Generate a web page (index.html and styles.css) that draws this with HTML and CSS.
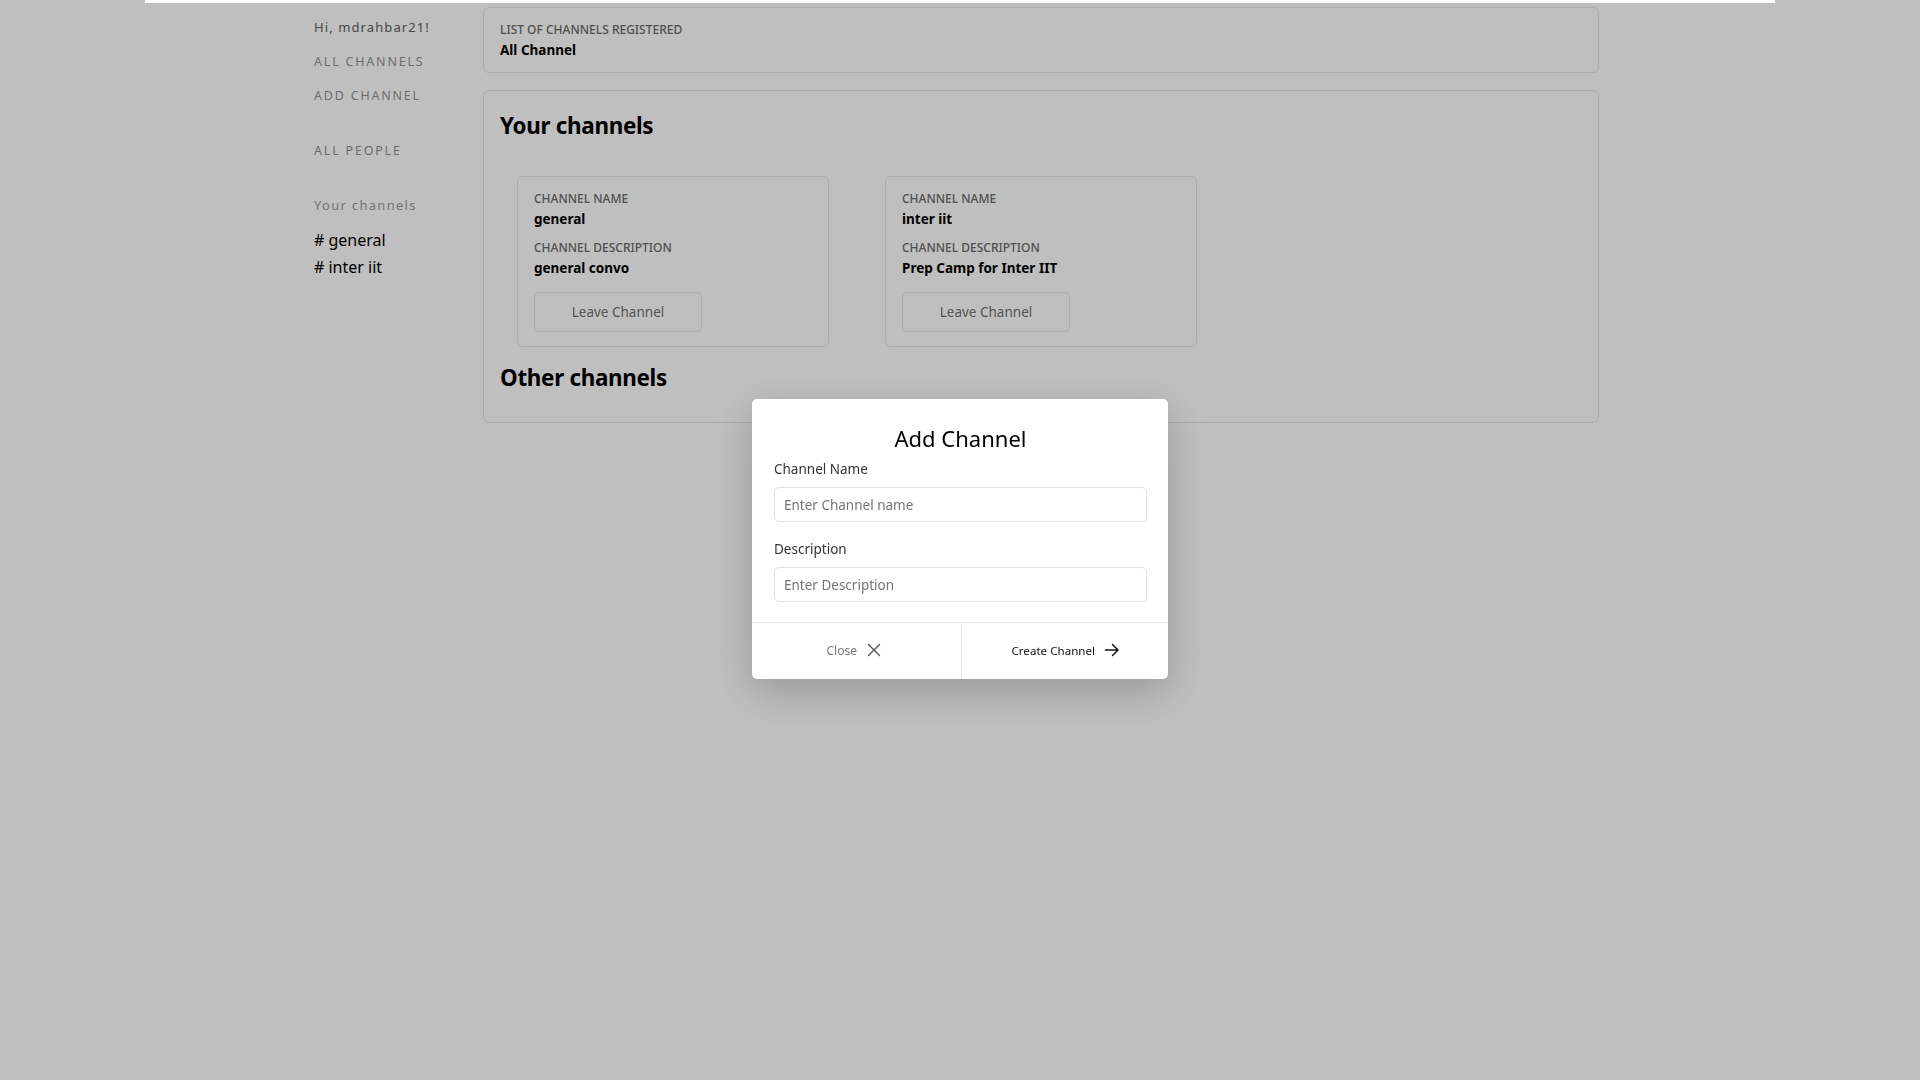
FILE: index.html
```html
<!DOCTYPE html>
<html lang="en">
<head>
<meta charset="utf-8">
<title>Channels</title>
<link rel="stylesheet" href="styles.css">
</head>
<body>
<div class="topbar"></div>
<div class="layout">
  <aside class="sidebar">
    <div class="greet">Hi, mdrahbar21!</div>
    <a class="nav nav-all">ALL CHANNELS</a>
    <a class="nav nav-add">ADD CHANNEL</a>
    <a class="nav nav-people">ALL PEOPLE</a>
    <div class="side-title">Your channels</div>
    <a class="chan chan-first"># general</a>
    <a class="chan"># inter iit</a>
  </aside>
  <main class="main">
    <section class="panel panel-head">
      <div class="label">LIST OF CHANNELS REGISTERED</div>
      <div class="value">All Channel</div>
    </section>
    <section class="panel panel-body">
      <h2 class="heading">Your channels</h2>
      <div class="cards">
        <div class="card">
          <div class="label">CHANNEL NAME</div>
          <div class="value">general</div>
          <div class="label label-gap">CHANNEL DESCRIPTION</div>
          <div class="value">general convo</div>
          <button class="leave">Leave Channel</button>
        </div>
        <div class="card">
          <div class="label">CHANNEL NAME</div>
          <div class="value">inter iit</div>
          <div class="label label-gap">CHANNEL DESCRIPTION</div>
          <div class="value">Prep Camp for Inter IIT</div>
          <button class="leave">Leave Channel</button>
        </div>
      </div>
      <h2 class="heading heading-other">Other channels</h2>
    </section>
  </main>
</div>

<div class="overlay">
  <div class="modal">
    <div class="modal-body">
      <h3 class="modal-title">Add Channel</h3>
      <label class="field-label">Channel Name</label>
      <input class="field" type="text" placeholder="Enter Channel name">
      <label class="field-label field-label-gap">Description</label>
      <input class="field" type="text" placeholder="Enter Description">
    </div>
    <div class="modal-foot">
      <button class="foot-btn foot-close">Close
        <svg class="ico" width="16" height="16" viewBox="0 0 16 16" fill="none" stroke="currentColor" stroke-width="1.4" stroke-linecap="round"><path d="M2.5 2.5 L13.5 13.5 M13.5 2.5 L2.5 13.5"/></svg>
      </button>
      <button class="foot-btn foot-create">Create Channel
        <svg class="ico" width="16" height="16" viewBox="0 0 16 16" fill="none" stroke="currentColor" stroke-width="1.5" stroke-linecap="round" stroke-linejoin="round"><path d="M1.5 8 H14 M8.5 2.5 L14 8 L8.5 13.5"/></svg>
      </button>
    </div>
  </div>
</div>
</body>
</html>
```
FILE: styles.css
```css
* { box-sizing: border-box; }
html, body { margin: 0; padding: 0; }
body {
  background: #ffffff;
  font-family: "Noto Sans", "Open Sans", sans-serif;
  color: #000;
  width: 1920px;
  height: 1080px;
  overflow: hidden;
}
.topbar {
  width: 1630px;
  height: 3px;
  margin: 0 auto;
  background: #ffffff;
  position: relative;
  z-index: 30;
}
.layout {
  display: flex;
  width: 1292px;
  margin: 4px auto 0;
}
.sidebar {
  width: 169px;
  flex: none;
  display: flex;
  flex-direction: column;
  padding-top: 10px;
}
.greet {
  font-size: 13px;
  line-height: 20px;
  letter-spacing: 1.1px;
  color: #5e5e5e;
}
.nav {
  font-size: 12.5px;
  line-height: 20px;
  letter-spacing: 1.8px;
  color: #929292;
  text-decoration: none;
}
.nav-all { margin-top: 15px; }
.nav-add { margin-top: 14px; }
.nav-people { margin-top: 35px; }
.side-title {
  margin-top: 34px;
  font-size: 13px;
  line-height: 20px;
  letter-spacing: 1.3px;
  color: #9c9c9c;
}
.chan {
  font-size: 16px;
  line-height: 24px;
  color: #000;
  margin-top: 3px;
}
.chan-first { margin-top: 13px; }

.main {
  width: 1116px;
  flex: none;
  display: flex;
  flex-direction: column;
  gap: 17px;
}
.panel {
  border: 1px solid #e6e6e6;
  border-radius: 6px;
}
.panel-head {
  height: 66px;
  padding: 14px 16px 0;
}
.label {
  font-size: 12px;
  line-height: 16px;
  color: #6b6b6b;
  font-weight: 500;
  letter-spacing: 0;
}
.value {
  font-size: 13.5px;
  line-height: 20px;
  font-weight: 700;
  margin-top: 2px;
  color: #000;
}
.panel-body {
  height: 333px;
  padding: 19px 16px 0;
}
.heading {
  margin: 0;
  font-size: 22.4px;
  line-height: 32px;
  font-weight: 700;
  letter-spacing: -0.3px;
}
.cards {
  display: flex;
  gap: 56px;
  margin: 34px 0 0 17px;
}
.card {
  width: 312px;
  height: 171px;
  border: 1px solid #e6e6e6;
  border-radius: 6px;
  padding: 14px 16px 0;
  display: flex;
  flex-direction: column;
  align-items: flex-start;
}
.card .value { margin-top: 2px; }
.card .label-gap { margin-top: 11px; }
.card .label-gap + .value { margin-top: 2px; }
.leave {
  margin-top: 14px;
  width: 168px;
  height: 40px;
  border: 1px solid #e6e6e6;
  border-radius: 5px;
  background: transparent;
  font-family: inherit;
  font-size: 13.5px;
  color: #717171;
}
.heading-other { margin-top: 15px; }

.overlay {
  position: fixed;
  inset: 0;
  background: rgba(0, 0, 0, 0.25);
  display: flex;
  align-items: center;
  justify-content: center;
  z-index: 10;
}
.modal {
  width: 416px;
  height: 280px;
  background: #fff;
  border-radius: 5px;
  box-shadow: 0 12px 40px rgba(0, 0, 0, 0.22);
  display: flex;
  flex-direction: column;
  margin-top: -2px;
}
.modal-body {
  padding: 23px 21px 0 22px;
  display: flex;
  flex-direction: column;
  height: 224px;
  border-bottom: 1px solid #e9e9e9;
}
.modal-title {
  margin: 0;
  text-align: center;
  font-size: 22px;
  line-height: 32px;
  font-weight: 400;
  color: #000;
}
.field-label {
  margin-top: 5px;
  font-size: 13.5px;
  line-height: 20px;
  color: #333;
}
.field-label-gap { margin-top: 17px; }
.field {
  margin-top: 8px;
  width: 373px;
  height: 35px;
  border: 1px solid #e3e3e3;
  border-radius: 5px;
  padding: 0 9px;
  font-family: inherit;
  font-size: 13.5px;
  outline: none;
}
.field::placeholder { color: #757575; }
.modal-foot {
  flex: 1;
  display: flex;
}
.foot-btn {
  flex: 1;
  border: none;
  background: transparent;
  font-family: inherit;
  font-size: 12px;
  display: flex;
  align-items: center;
  justify-content: center;
  gap: 9px;
  padding: 0 0 2px;
}
.foot-close {
  color: #777;
  border-right: 1px solid #e9e9e9;
  padding-right: 4px;
}
.foot-close .ico { color: #555; }
.foot-create { color: #111; font-size: 11.6px; padding-left: 2px; }
.ico { display: block; }
```
